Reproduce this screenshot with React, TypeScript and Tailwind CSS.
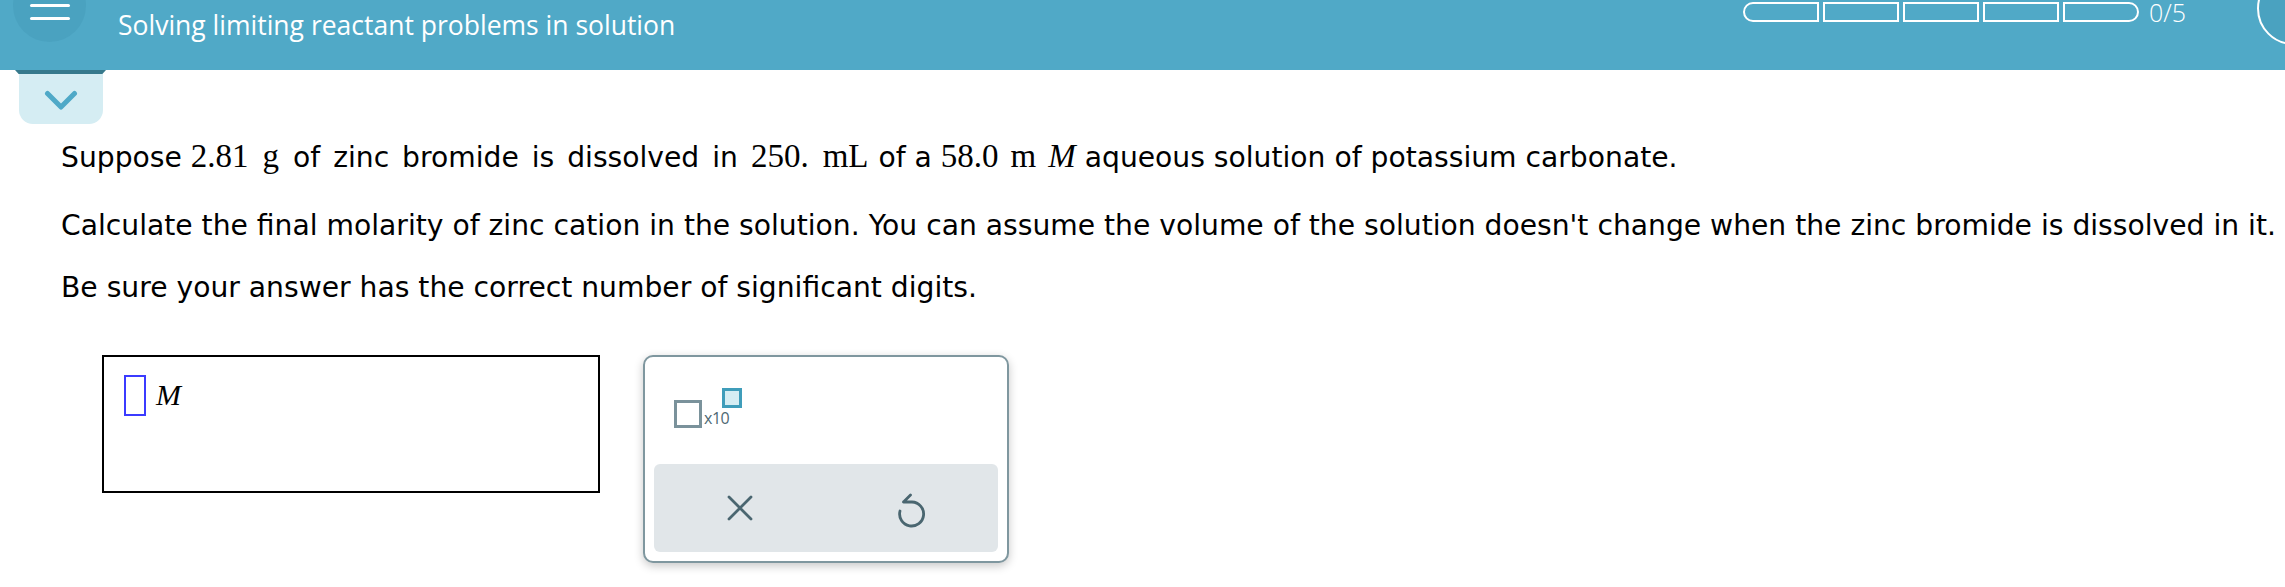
import React from "react";

const serif = "font-['Liberation_Serif','Times_New_Roman',serif]";

function Segment({ first, last }: { first?: boolean; last?: boolean }) {
  return (
    <div
      className={
        "h-[20px] w-[76px] border-2 border-white " +
        (first ? "rounded-l-full " : "") +
        (last ? "rounded-r-full" : "")
      }
    />
  );
}

export default function App() {
  return (
    <div className="relative h-[587px] w-[2285px] overflow-hidden bg-white font-['DejaVu_Sans',sans-serif] text-black">
      {/* Header */}
      <header className="relative flex h-[70px] items-start bg-[#50a9c7]">
        <div className="absolute left-[13px] top-[-31px] h-[73px] w-[73px] rounded-full bg-[#4aa2c0]" />
        <div className="absolute left-[30px] top-[-9px] flex w-[40px] flex-col gap-[10px]">
          <span className="block h-[3px] rounded-full bg-white" />
          <span className="block h-[3px] rounded-full bg-white" />
          <span className="block h-[3px] rounded-full bg-white" />
        </div>
        <h1 className="ml-[118px] mt-[8px] font-['Open_Sans',sans-serif] text-[26.5px] font-medium leading-[34px] text-white">
          Solving limiting reactant problems in solution
        </h1>
        <div className="ml-auto mr-[99px] mt-[1px] flex items-center gap-[4px]">
          <Segment first />
          <Segment />
          <Segment />
          <Segment />
          <Segment last />
          <span className="ml-[6px] font-['Open_Sans',sans-serif] text-[25px] font-light leading-[22px] text-white">
            0/5
          </span>
        </div>
        <div className="absolute left-[2257px] top-[-28px] h-[73px] w-[73px] rounded-full border-2 border-white bg-[#4aa2c0]" />
      </header>

      {/* Drawer tab */}
      <div className="ml-[15px] flex w-[91px] flex-col items-center">
        <div className="h-[4px] w-[91px] bg-[#36798c] [clip-path:polygon(0_0,100%_0,96%_100%,4%_100%)]" />
        <div className="flex h-[50px] w-[84px] items-start justify-center rounded-b-[14px] bg-[#d5edf3] pt-[16px]">
          <svg width="34" height="21" viewBox="0 0 34 21" fill="none">
            <path d="M3.5 3.5 L17 17 L30.5 3.5" stroke="#4fa9c7" strokeWidth="5" strokeLinecap="round" strokeLinejoin="round" />
          </svg>
        </div>
      </div>

      {/* Question */}
      <div className="pl-[61px]">
        <p className="mt-[12px] text-[28.2px] leading-[40px]">
          Suppose <span className={serif + " text-[33px]"}>2.81</span>
          <span className={serif + " mx-[14px] text-[33px]"}>g</span>
          <span className="[word-spacing:4px]">of zinc bromide is dissolved in</span>{" "}
          <span className={serif + " ml-[4px] text-[33px]"}>250.</span>
          <span className={serif + " ml-[14px] mr-[10px] text-[33px]"}>mL</span>of a{" "}
          <span className={serif + " text-[33px]"}>58.0</span>
          <span className={serif + " mx-[12px] text-[33px]"}>m</span>
          <span className={serif + " text-[33px] italic"}>M</span> aqueous solution of potassium carbonate.
        </p>
        <p className="mt-[28px] text-[28.2px] leading-[40px]">
          Calculate the final molarity of zinc cation in the solution. You can assume the volume of the solution doesn't change when the zinc bromide is dissolved in it.
        </p>
        <p className="mt-[22px] text-[28.2px] leading-[40px]">
          Be sure your answer has the correct number of significant digits.
        </p>
      </div>

      {/* Answer area */}
      <div className="ml-[102px] mt-[47px] flex items-start">
        <div className="flex h-[138px] w-[498px] items-start border-2 border-black pl-[20px] pt-[18px]">
          <div className="h-[41px] w-[22px] border-2 border-[#3b3bff]" />
          <span className={serif + " ml-[10px] mt-[4px] text-[30px] italic leading-[32px]"}>M</span>
        </div>

        <div className="ml-[43px] flex h-[208px] w-[366px] flex-col rounded-[10px] border-2 border-[#7f979f] bg-white p-[9px] shadow-[0_3px_10px_rgba(0,0,0,0.22)]">
          <div className="h-[98px] pl-[20px] pt-[22px]">
            <div className="relative flex h-[40px] w-[80px] items-end">
              <div className="h-[28px] w-[28px] border-[3px] border-[#7a929b]" />
              <span className="mb-[2px] ml-[2px] font-['Open_Sans',sans-serif] text-[16px] font-medium leading-none tracking-[-0.5px] text-[#4d6873]">
                x10
              </span>
              <div className="absolute left-[48px] top-0 h-[20px] w-[20px] border-[3px] border-[#3f9dba] bg-[#d5edf3]" />
            </div>
          </div>
          <div className="flex h-[88px] rounded-[6px] bg-[#e1e6e9]">
            <div className="flex flex-1 items-center justify-center">
              <svg width="26" height="26" viewBox="0 0 26 26" fill="none">
                <path d="M2 2 L24 24 M24 2 L2 24" stroke="#4a6670" strokeWidth="2.8" strokeLinecap="round" />
              </svg>
            </div>
            <div className="flex flex-1 items-center justify-center">
              <svg width="30" height="36" viewBox="0 0 30 36" fill="none" className="mt-[4px]">
                <path
                  d="M3 19 A 12 12 0 1 0 15 10 L 6.5 10 M 6.5 10 L 13.5 3"
                  stroke="#4a6670"
                  strokeWidth="2.8"
                  strokeLinecap="round"
                  strokeLinejoin="round"
                />
              </svg>
            </div>
          </div>
        </div>
      </div>
    </div>
  );
}
